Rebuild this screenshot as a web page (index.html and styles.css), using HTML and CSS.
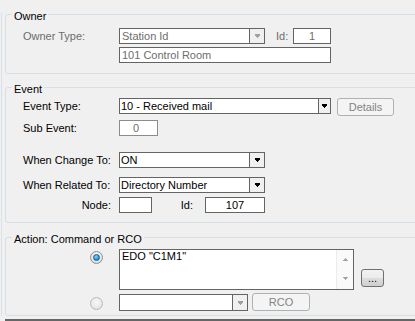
FILE: index.html
```html
<!DOCTYPE html>
<html>
<head>
<meta charset="utf-8">
<link rel="stylesheet" href="styles.css">
</head>
<body>
<div class="frame">
  <section class="group owner">
    <span class="legend">Owner</span>
    <div class="row">
      <span class="label dis">Owner Type:</span>
      <div class="combo dis w146">
        <span class="val">Station Id</span>
        <span class="btn w15"><svg class="arrow" width="5" height="4" viewBox="0 0 5 4"><path d="M0 0h5v1H0zM0 1h5v1H0zM1 2h3v1H1zM2 3h1v1H2z"/></svg></span>
      </div>
      <span class="id-lbl dis">Id:</span>
      <div class="box dis w38 center">1</div>
    </div>
    <div class="row mt3">
      <span class="label"></span>
      <div class="box dis w212">101 Control Room</div>
    </div>
  </section>

  <section class="group event">
    <span class="legend">Event</span>
    <div class="row">
      <span class="label">Event Type:</span>
      <div class="combo w212">
        <span class="val">10 - Received mail</span>
        <span class="btn w12"><svg class="arrow" width="5" height="4" viewBox="0 0 5 4"><path d="M0 0h5v1H0zM0 1h5v1H0zM1 2h3v1H1zM2 3h1v1H2z"/></svg></span>
      </div>
      <button class="wbtn dis details">Details</button>
    </div>
    <div class="row mt6">
      <span class="label">Sub Event:</span>
      <div class="box sub w39">0</div>
    </div>
    <div class="row mt16">
      <span class="label">When Change To:</span>
      <div class="combo w146">
        <span class="val">ON</span>
        <span class="btn w15"><svg class="arrow" width="5" height="4" viewBox="0 0 5 4"><path d="M0 0h5v1H0zM0 1h5v1H0zM1 2h3v1H1zM2 3h1v1H2z"/></svg></span>
      </div>
    </div>
    <div class="row mt9">
      <span class="label">When Related To:</span>
      <div class="combo w146">
        <span class="val">Directory Number</span>
        <span class="btn w15"><svg class="arrow" width="5" height="4" viewBox="0 0 5 4"><path d="M0 0h5v1H0zM0 1h5v1H0zM1 2h3v1H1zM2 3h1v1H2z"/></svg></span>
      </div>
    </div>
    <div class="row mt4">
      <span class="label right">Node:</span>
      <div class="box w33"></div>
      <span class="id-lbl2">Id:</span>
      <div class="box w60 center">107</div>
    </div>
  </section>

  <section class="group action">
    <span class="legend">Action: Command or RCO</span>
    <div class="arow a1">
      <span class="radio-cell"><span class="radio on"><span class="dot"></span></span></span>
      <div class="memo">
        <div class="memo-text">EDO "C1M1"</div>
        <div class="sb">
          <svg width="5" height="3" viewBox="0 0 5 3"><path d="M2 0h1v1H2zM1 1h3v1H1zM0 2h5v1H0z"/></svg>
          <svg width="5" height="3" viewBox="0 0 5 3"><path d="M0 0h5v1H0zM1 1h3v1H1zM2 2h1v1H2z"/></svg>
        </div>
      </div>
      <button class="wbtn more">...</button>
    </div>
    <div class="arow a2">
      <span class="radio-cell r2"><span class="radio off"></span></span>
      <div class="combo dis2 w129">
        <span class="val"></span>
        <span class="btn w15"><svg class="arrow" width="5" height="4" viewBox="0 0 5 4"><path d="M0 0h5v1H0zM0 1h5v1H0zM1 2h3v1H1zM2 3h1v1H2z"/></svg></span>
      </div>
      <button class="wbtn dis rco">RCO</button>
    </div>
  </section>
</div>
<div class="bottombar"></div>
</body>
</html>
```

FILE: styles.css
```css
html, body {
  margin: 0;
  height: 100%;
  overflow: hidden;
  background: #f0f0f0;
}
body {
  font-family: "Liberation Sans", Arial, sans-serif;
  font-size: 11px;
  line-height: 13px;
  color: #000;
}
.frame {
  margin: 8px 0 0 1px;
  padding: 6px 0 0 4px;
  background: linear-gradient(#dae2e8, #dae2e8) no-repeat 0 5px / 1px calc(100% - 5px);
  overflow-x: clip;
}
.group {
  position: relative;
  width: 420px;
  box-sizing: border-box;
  border: 1px solid #d5dfe5;
  border-radius: 3px;
  padding-left: 17px;
}
.legend {
  position: absolute;
  left: 6px;
  top: -5px;
  padding: 0 2px;
  background: #f0f0f0;
  line-height: 13px;
  white-space: nowrap;
}
.owner { padding-top: 13px; padding-bottom: 10px; }
.event { margin-top: 13px; padding-top: 10px; padding-bottom: 9px; }
.action { margin-top: 14px; padding-top: 11px; padding-bottom: 4px; }

.row {
  display: flex;
  align-items: center;
  height: 16px;
}
.mt3 { margin-top: 3px; }
.mt4 { margin-top: 4px; }
.mt6 { margin-top: 6px; }
.mt9 { margin-top: 9px; }
.mt16 { margin-top: 16px; }

.label {
  flex: none;
  width: 96px;
  white-space: nowrap;
}
.label.right {
  text-align: right;
  padding-right: 8px;
  box-sizing: border-box;
}
.dis { color: #6d6d6d; }

.combo {
  flex: none;
  display: flex;
  height: 16px;
  box-sizing: border-box;
  border: 1px solid #646464;
  background: #fff;
}
.combo .val {
  flex: 1;
  padding-left: 1px;
  line-height: 14px;
  white-space: nowrap;
  overflow: hidden;
}
.combo.dis .val { padding-left: 2px; }
.combo .btn {
  flex: none;
  box-sizing: border-box;
  border-left: 1px solid #646464;
  background: #f0f0f0;
  display: flex;
  align-items: center;
  justify-content: center;
}
.combo .btn .arrow { fill: #000; }
.combo.dis .btn .arrow, .combo.dis2 .btn .arrow { fill: #a0a0a0; }
.combo.dis2 { height: 17px; margin-top: 1px; }

.w12 { width: 12px; }
.w15 { width: 15px; }
.w33 { width: 33px; }
.w38 { width: 38px; }
.w39 { width: 39px; }
.w60 { width: 60px; }
.w129 { width: 129px; }
.w146 { width: 146px; }
.w212 { width: 212px; }

.box {
  flex: none;
  height: 16px;
  box-sizing: border-box;
  border: 1px solid #646464;
  background: #fff;
  padding-left: 2px;
  line-height: 14px;
  white-space: nowrap;
}
.box.center { text-align: center; padding-left: 0; }
.box.sub {
  border-color: #8c8c8c;
  color: #6d6d6d;
  text-align: center;
  padding: 0 5px 0 0;
}

.id-lbl {
  flex: none;
  width: 17px;
  margin-left: 11px;
}
.id-lbl2 {
  flex: none;
  width: 53px;
  box-sizing: border-box;
  text-align: right;
  padding-right: 12px;
}

.wbtn {
  flex: none;
  box-sizing: border-box;
  height: 18px;
  padding: 0;
  font: inherit;
  line-height: 14px;
  border-radius: 3px;
  border: 1px solid #707070;
  background: linear-gradient(#f2f2f2, #ebebeb 50%, #dddddd 51%, #cfcfcf);
  color: #000;
}
.wbtn.dis {
  border-color: #adb2b5;
  background: #f4f4f4;
  color: #838383;
}
.details {
  width: 57px;
  margin-left: 6px;
  align-self: flex-start;
}

.arow {
  display: flex;
  align-items: flex-start;
}
.a1 { height: 41px; }
.a2 { height: 18px; margin-top: 3px; }

.radio-cell {
  flex: none;
  width: 96px;
  box-sizing: border-box;
  padding-left: 67px;
  padding-top: 2px;
}
.radio-cell.r2 { padding-top: 4px; }
.radio {
  display: block;
  width: 13px;
  height: 13px;
  box-sizing: border-box;
  border-radius: 50%;
  position: relative;
}
.radio.on {
  border: 1px solid #8e8f8f;
  background: radial-gradient(circle at 50% 35%, #ffffff, #e0e0e0 70%, #cfcfcf);
}
.radio.on .dot {
  position: absolute;
  left: 2px;
  top: 2px;
  width: 7px;
  height: 7px;
  box-sizing: border-box;
  border-radius: 50%;
  border: 1px solid #1c5f95;
  background: radial-gradient(circle at 40% 35%, #7fd6fb, #2a9be0 55%, #0d5c9d);
}
.radio.off {
  border: 1px solid #b9b9b9;
  background: radial-gradient(circle at 50% 40%, #f8f8f8, #e6e6e6 70%, #dcdcdc);
}

.memo {
  flex: none;
  display: flex;
  width: 235px;
  height: 41px;
  box-sizing: border-box;
  border: 1px solid #646464;
  background: #fff;
}
.memo-text {
  flex: 1;
  padding: 0 2px;
  white-space: nowrap;
}
.sb {
  flex: none;
  width: 17px;
  box-sizing: border-box;
  border-left: 1px solid #ececec;
  background: #fafafa;
  display: flex;
  flex-direction: column;
  align-items: center;
  justify-content: space-between;
  padding: 8px 0 9px;
  fill: #a6a6a6;
}
.more {
  width: 23px;
  margin-left: 7px;
  margin-top: 20px;
}
.rco {
  width: 58px;
  margin-left: 4px;
}
.bottombar {
  margin: 3px 0 0 5px;
  height: 4px;
  border-top: 2px solid #666;
  background: #8a8a8a;
}
```
